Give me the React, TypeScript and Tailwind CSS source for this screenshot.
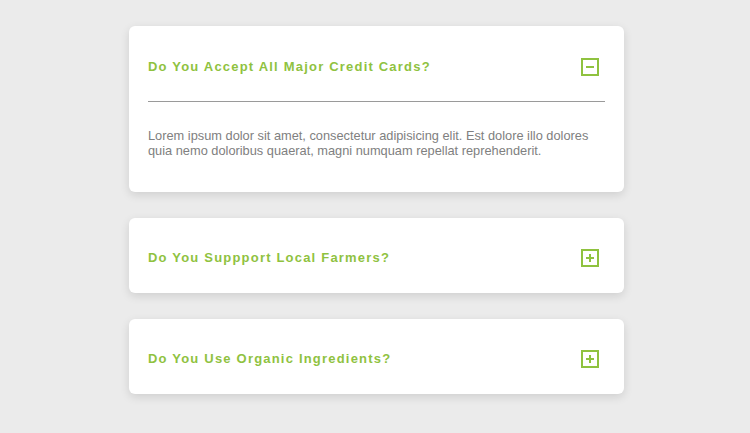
import { useState } from 'react';

interface Faq {
  q: string;
  a: string;
}

const faqs: Faq[] = [
  {
    q: 'Do You Accept All Major Credit Cards?',
    a: 'Lorem ipsum dolor sit amet, consectetur adipisicing elit. Est dolore illo dolores quia nemo doloribus quaerat, magni numquam repellat reprehenderit.',
  },
  {
    q: 'Do You Suppport Local Farmers?',
    a: 'Lorem ipsum dolor sit amet, consectetur adipisicing elit. Est dolore illo dolores quia nemo doloribus quaerat, magni numquam repellat reprehenderit.',
  },
  {
    q: 'Do You Use Organic Ingredients?',
    a: 'Lorem ipsum dolor sit amet, consectetur adipisicing elit. Est dolore illo dolores quia nemo doloribus quaerat, magni numquam repellat reprehenderit.',
  },
];

function ToggleIcon({ open }: { open: boolean }) {
  return (
    <svg width="18" height="18" viewBox="0 0 18 18" fill="none" stroke="#8fc23f" strokeWidth={2}>
      <rect x="1" y="1" width="16" height="16" />
      <path d="M5 9h8" />
      {!open && <path d="M9 5v8" />}
    </svg>
  );
}

export default function App() {
  const [open, setOpen] = useState<number>(0);

  return (
    <div className="min-h-[433px] bg-[#ebebeb] pt-[26px] pb-[38px] pl-[3px]" style={{ fontFamily: '"Liberation Sans", Arial, sans-serif' }}>
      <div className="w-[495px] mx-auto flex flex-col gap-[26px]">
        {faqs.map((f, i) => (
          <div key={i} className="bg-white rounded-[6px] shadow-[0_3px_10px_rgba(0,0,0,0.12)] px-[19px]">
            <button
              className="w-full h-[75px] flex items-center justify-between text-left cursor-pointer"
              onClick={() => setOpen(open === i ? -1 : i)}
            >
              <span className={`text-[13px] font-bold tracking-[1.2px] text-[#8fc23f] ${i === 0 ? 'pt-[6px]' : 'pt-[4px]'}`}>{f.q}</span>
              <span className={`mr-[6px] flex ${i === 0 ? 'pt-[6px]' : 'pt-[4px]'}`}>
                <ToggleIcon open={open === i} />
              </span>
            </button>
            {open === i && (
              <>
                <div className="border-t border-[#9a9a9a]" />
                <p className="pt-[26px] pb-[34px] text-[12.8px] leading-[15px] text-[#808080]">{f.a}</p>
              </>
            )}
          </div>
        ))}
      </div>
    </div>
  );
}
